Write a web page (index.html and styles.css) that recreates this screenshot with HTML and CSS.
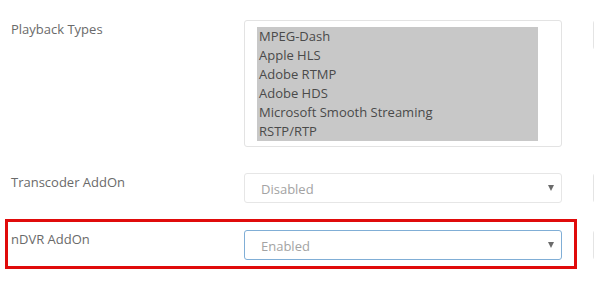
FILE: index.html
```html
<!DOCTYPE html>
<html lang="en">
<head>
  <meta charset="UTF-8">
  <title>Stream Settings</title>
  <link rel="stylesheet" href="styles.css">
</head>
<body>
<div class="form">

  <div class="row row-list">
    <label class="label">Playback Types</label>
    <div class="listbox">
      <ul class="options">
        <li>MPEG-Dash</li>
        <li>Apple HLS</li>
        <li>Adobe RTMP</li>
        <li>Adobe HDS</li>
        <li>Microsoft Smooth Streaming</li>
        <li>RSTP/RTP</li>
      </ul>
    </div>
    <div class="next-col"></div>
  </div>

  <div class="row">
    <label class="label">Transcoder AddOn</label>
    <div class="select">
      <span>Disabled</span>
      <span class="caret"></span>
    </div>
    <div class="next-col"></div>
  </div>

  <div class="row highlighted">
    <label class="label">nDVR AddOn</label>
    <div class="select focused">
      <span>Enabled</span>
      <span class="caret"></span>
    </div>
    <div class="next-col"></div>
    <!-- annotation box -->
    <div class="callout"></div>
  </div>

</div>
</body>
</html>
```

FILE: styles.css
```css
html, body { margin: 0; padding: 0; background: #fff; overflow: hidden; }
body { font-family: "Open Sans", Arial, sans-serif; font-size: 13px; color: #666; width: 594px; height: 289px; }

.form { padding: 20px 0 0 11px; }

.row { display: grid; grid-template-columns: 202px 318px 80px; column-gap: 31px; align-items: start; margin-bottom: 26px; position: relative; }
.row:nth-child(2) { margin-bottom: 27px; }
.row.highlighted { margin-bottom: 0; }

.label { line-height: 18px; color: #6a6a6a; margin-right: -31px; }

.listbox { box-sizing: border-box; height: 127px; border: 1px solid #e3e3e3; border-radius: 3px; padding: 6px 0 0 12px; }
.options { list-style: none; margin: 0; padding: 0; width: 281px; background: #c8c8c8; }
.options li { line-height: 19px; height: 19px; padding-left: 2px; color: #4a4a4a; white-space: nowrap; }

.select { box-sizing: border-box; height: 30px; border: 1px solid #e6e6e6; border-radius: 3px; padding: 0 0 0 16px; display: flex; align-items: center; justify-content: space-between; color: #a3a3a3; line-height: 18px; }
.select span:first-child { padding-top: 2px; }
.select.focused { border-color: #80aed6; }
.caret { width: 0; height: 0; margin-right: 7px; margin-top: -1px; border-left: 3.5px solid transparent; border-right: 3.5px solid transparent; border-top: 6px solid #6b6b6b; }

.next-col { box-sizing: border-box; height: 30px; border: 1px solid #e4e4e4; border-radius: 3px; }

.callout { position: absolute; left: -6px; top: -11px; width: 566px; height: 44px; border: 3px solid #e00b0b; }
```
